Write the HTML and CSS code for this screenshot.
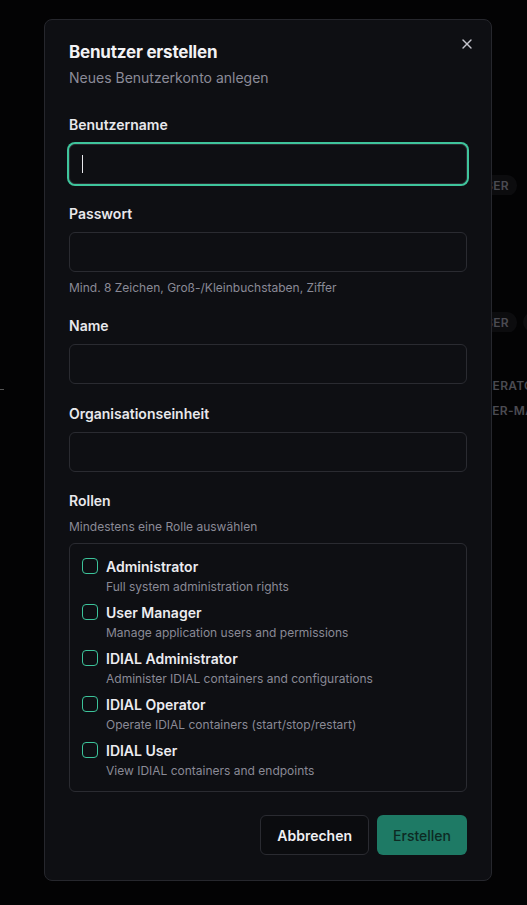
FILE: index.html
```html
<!DOCTYPE html>
<html lang="de">
<head>
  <meta charset="UTF-8">
  <title>Benutzer erstellen</title>
  <meta name="viewport" content="width=device-width, initial-scale=1.0">
  <link rel="stylesheet" href="styles.css">
</head>
<body>

  <div class="backdrop-page">
    <div class="bg-row row-1"><span class="bg-badge">USER</span></div>
    <div class="bg-row row-2"><span class="bg-badge">USER</span><span class="bg-badge dot"></span></div>
    <div class="bg-row row-3"><span class="bg-text">OPERATOR</span></div>
    <div class="bg-row row-4"><span class="bg-text">USER-MANAGER</span></div>
    <div class="bg-line"></div>
  </div>

  <div class="overlay">
    <div class="dialog">
      <button class="close" aria-label="Schließen">
        <svg width="16" height="16" viewBox="0 0 24 24" fill="none" stroke="currentColor" stroke-width="2" stroke-linecap="round">
          <path d="M18 6 6 18"/><path d="M6 6l12 12"/>
        </svg>
      </button>

      <h2 class="title">Benutzer erstellen</h2>
      <p class="subtitle">Neues Benutzerkonto anlegen</p>

      <div class="field first">
        <label>Benutzername</label>
        <div class="input focused"><span class="caret"></span></div>
      </div>

      <div class="field">
        <label>Passwort</label>
        <div class="input"></div>
        <p class="hint">Mind. 8 Zeichen, Groß-/Kleinbuchstaben, Ziffer</p>
      </div>

      <div class="field">
        <label>Name</label>
        <div class="input"></div>
      </div>

      <div class="field">
        <label>Organisationseinheit</label>
        <div class="input"></div>
      </div>

      <div class="field roles-field">
        <label>Rollen</label>
        <p class="hint roles-hint">Mindestens eine Rolle auswählen</p>
        <div class="roles">
          <div class="role">
            <span class="check"></span>
            <div>
              <div class="role-name">Administrator</div>
              <div class="role-desc">Full system administration rights</div>
            </div>
          </div>
          <div class="role">
            <span class="check"></span>
            <div>
              <div class="role-name">User Manager</div>
              <div class="role-desc">Manage application users and permissions</div>
            </div>
          </div>
          <div class="role">
            <span class="check"></span>
            <div>
              <div class="role-name">IDIAL Administrator</div>
              <div class="role-desc">Administer IDIAL containers and configurations</div>
            </div>
          </div>
          <div class="role">
            <span class="check"></span>
            <div>
              <div class="role-name">IDIAL Operator</div>
              <div class="role-desc">Operate IDIAL containers (start/stop/restart)</div>
            </div>
          </div>
          <div class="role">
            <span class="check"></span>
            <div>
              <div class="role-name">IDIAL User</div>
              <div class="role-desc">View IDIAL containers and endpoints</div>
            </div>
          </div>
        </div>
      </div>

      <div class="actions">
        <button class="btn btn-outline">Abbrechen</button>
        <button class="btn btn-primary">Erstellen</button>
      </div>
    </div>
  </div>

</body>
</html>
```

FILE: styles.css
```css
* {
  box-sizing: border-box;
}

body {
  margin: 0;
  width: 527px;
  height: 905px;
  overflow: hidden;
  background-color: #030304;
  font-family: Inter, "Noto Sans", sans-serif;
  color: #ececf0;
  position: relative;
}

/* page behind the modal, dimmed */
.backdrop-page {
  position: absolute;
  inset: 0;
  padding-top: 175px;
  overflow: hidden;
}

.bg-row {
  display: flex;
  gap: 6px;
  height: 20px;
  align-items: center;
  white-space: nowrap;
  overflow: hidden;
  font-size: 12px;
  font-weight: 600;
  color: #4b4b52;
  letter-spacing: 0.3px;
}

.row-1 { padding-left: 468px; }
.row-2 { padding-left: 468px; margin-top: 117px; }
.row-3 { padding-left: 475px; margin-top: 43px; }
.row-4 { padding-left: 475px; margin-top: 5px; }

.bg-badge {
  flex: none;
  background-color: #0c0c0e;
  border-radius: 10px;
  padding: 3px 8px;
}

.bg-badge.dot {
  width: 22px;
  height: 20px;
}

.bg-line {
  position: absolute;
  left: 0;
  top: 389px;
  width: 4px;
  height: 1px;
  background-color: #555;
}

.overlay {
  position: absolute;
  inset: 0;
  padding: 19px 0 0 44px;
}

.dialog {
  position: relative;
  width: 448px;
  background-color: #0e0f13;
  border: 1px solid #26272d;
  border-radius: 8px;
  padding: 22px 24px 25px;
}

.close {
  position: absolute;
  top: 16px;
  right: 16px;
  background: none;
  border: none;
  padding: 0;
  color: #c4c4cc;
  cursor: pointer;
  display: flex;
}

.title {
  margin: 0;
  font-size: 17px;
  line-height: 20px;
  font-weight: 700;
  color: #f2f2f5;
  letter-spacing: -0.2px;
}

.subtitle {
  margin: 6px 0 0;
  font-size: 14px;
  line-height: 20px;
  color: #8b8b98;
}

.field {
  margin-top: 20px;
}

.field.first {
  margin-top: 27px;
}

.field.roles-field {
  margin-top: 19px;
}

.field label {
  display: block;
  font-size: 14px;
  line-height: 20px;
  font-weight: 600;
  color: #e8e8ec;
  margin-bottom: 8px;
}

.input {
  height: 40px;
  border: 1px solid #2a2b31;
  border-radius: 6px;
  background-color: #0e0f13;
  display: flex;
  align-items: center;
  padding: 0 12px;
}

.input.focused {
  margin-top: 9px;
  border-color: #2a2b31;
  box-shadow: 0 0 0 2px #3fc49c;
}

.caret {
  width: 1px;
  height: 18px;
  background-color: #e8e8ec;
}

.hint {
  margin: 8px 0 0;
  font-size: 12px;
  line-height: 16px;
  color: #8a8a96;
}

.field label + .roles-hint {
  margin: 1px 0 8px;
}

.roles {
  border: 1px solid #2a2b31;
  border-radius: 6px;
  padding: 13px 12px 12px;
  display: flex;
  flex-direction: column;
  gap: 8px;
}

.role {
  display: flex;
  gap: 8px;
  align-items: flex-start;
}

.check {
  flex: none;
  width: 16px;
  height: 16px;
  margin-top: 1px;
  border: 1px solid #3cc39a;
  border-radius: 4px;
}

.role-name {
  font-size: 14px;
  line-height: 20px;
  font-weight: 600;
  color: #ececf0;
}

.role-desc {
  margin-top: 2px;
  font-size: 12px;
  line-height: 16px;
  color: #8a8a96;
}

.actions {
  display: flex;
  justify-content: flex-end;
  gap: 8px;
  margin-top: 23px;
}

.btn {
  height: 40px;
  border-radius: 6px;
  font-family: inherit;
  font-size: 14px;
  padding: 0 16px;
  cursor: pointer;
}

.btn-outline {
  background-color: #0b0c0f;
  border: 1px solid #2a2b31;
  color: #f0f0f3;
  font-weight: 600;
}

.btn-primary {
  background-color: #1e7a65;
  border: none;
  color: #0d2a23;
  font-weight: 500;
}
```
